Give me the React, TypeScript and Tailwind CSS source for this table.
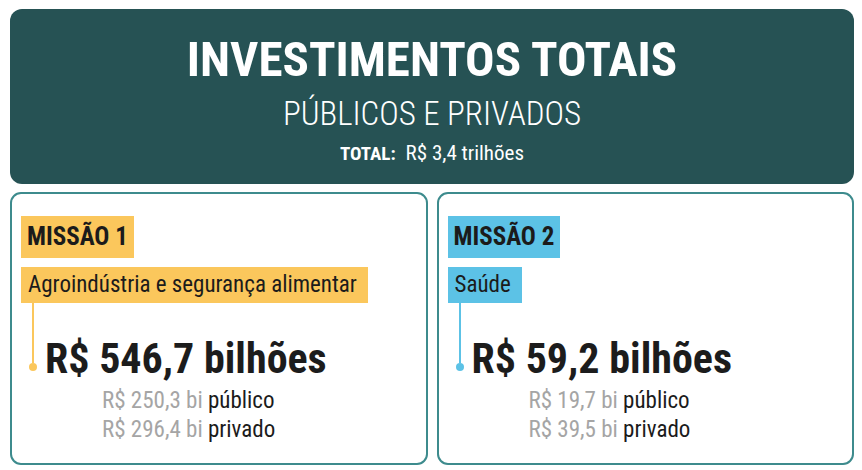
type Mission = {
  label: string;
  area: string;
  total: string;
  publico: string;
  privado: string;
  tag: string;
  line: string;
};

const missions: Mission[] = [
  {
    label: "MISSÃO 1",
    area: "Agroindústria e segurança alimentar",
    total: "R$ 546,7 bilhões",
    publico: "R$ 250,3 bi",
    privado: "R$ 296,4 bi",
    tag: "bg-[#fbc75c]",
    line: "bg-[#fbc75c]",
  },
  {
    label: "MISSÃO 2",
    area: "Saúde",
    total: "R$ 59,2 bilhões",
    publico: "R$ 19,7 bi",
    privado: "R$ 39,5 bi",
    tag: "bg-[#5cc2e6]",
    line: "bg-[#5cc2e6]",
  },
];

function MissionCard({ m }: { m: Mission }) {
  return (
    <div className="h-[273px] rounded-[11px] border-2 border-[#3d8b8d] bg-white pt-[22px] pl-[9px]">
      <div className="flex flex-col items-start">
        <div className={`flex h-[42px] items-center px-[6px] text-[25px] font-bold text-[#1b1b1b] ${m.tag}`}>
          {m.label}
        </div>
        <div className={`mt-[9px] flex h-[36px] items-center pl-[7px] pr-[11px] text-[23px] text-[#1b1b1b] ${m.tag}`}>
          {m.area}
        </div>
      </div>
      <div className="flex items-start">
        <div className="ml-[8px] flex w-[8px] flex-col items-center">
          <div className={`h-[60px] w-[2px] ${m.line}`} />
          <div className={`size-[8px] rounded-full ${m.line}`} />
        </div>
        <div className="mt-[34px] ml-[8px] text-[42px] leading-[44px] font-bold text-[#1c1c1c]">
          {m.total}
        </div>
      </div>
      <div className="mt-[5px] ml-[81px] text-[23px] leading-[29px] text-[#1b1b1b]">
        <div>
          <span className="text-[#a5a5a5]">{m.publico}</span> público
        </div>
        <div>
          <span className="text-[#a5a5a5]">{m.privado}</span> privado
        </div>
      </div>
    </div>
  );
}

export default function App() {
  return (
    <div className="h-[470px] w-[862px] bg-white pt-[9px] pr-[8px] pl-[10px] font-['Roboto_Condensed',sans-serif]">
      <div className="flex h-[175px] flex-col items-center rounded-[12px] bg-[#265254] pt-[26px] text-white">
        <h1 className="text-[49px] leading-[49px] font-bold">INVESTIMENTOS TOTAIS</h1>
        <h2 className="mt-[12px] text-[33px] leading-[36px] font-light">PÚBLICOS E PRIVADOS</h2>
        <p className="mt-[10px] flex items-baseline text-[21px] leading-[22px]">
          <span className="mr-[10px] text-[19px] font-bold">TOTAL:</span>R$ 3,4 trilhões
        </p>
      </div>
      <div className="mt-[8px] grid grid-cols-2 gap-[9px]">
        {missions.map((m) => (
          <MissionCard key={m.label} m={m} />
        ))}
      </div>
    </div>
  );
}
